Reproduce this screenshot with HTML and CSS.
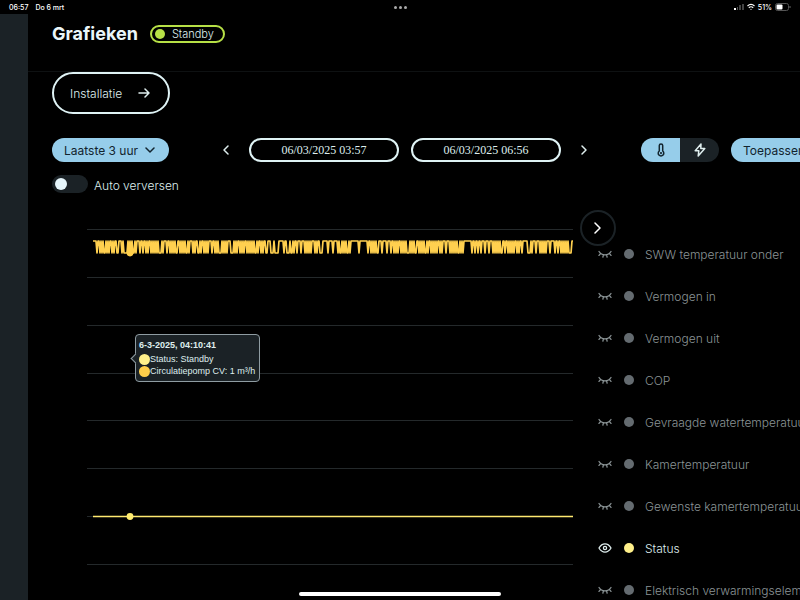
FILE: index.html
```
<!DOCTYPE html>
<html lang="nl">

<head>
    <meta charset="UTF-8">
    <meta name="viewport" content="width=device-width, initial-scale=1.0">
    <title>Grafieken</title>
    <link rel="stylesheet" href="styles.css">
</head>

<body>
    <svg class="symbols" width="0" height="0">
        <symbol id="eye-closed" viewBox="0 0 14 14">
            <path d="M1 4.5 Q3 7.8 7 7.8 T13 4.5 M2.8 6.4 L1 8.4 M5.4 7.8 L4.9 10.2 M8.6 7.8 L9.1 10.2 M11.2 6.4 L13 8.4" />
        </symbol>
        <symbol id="eye-open" viewBox="0 0 14 14">
            <path d="M1 7 Q3.4 2.9 7 2.9 T13 7 Q10.6 11.1 7 11.1 T1 7 Z" />
            <circle cx="7" cy="7" r="1.6" />
        </symbol>
    </svg>

    <div class="status-bar">
        <div class="status-left"><span>06:57</span><span>Do 6 mrt</span></div>
        <div class="status-dots"><i></i><i></i><i></i></div>
        <div class="status-right">
            <svg width="10" height="8" viewBox="0 0 10 8">
                <rect x="0" y="5" width="2" height="2" fill="#fff" />
                <rect x="3" y="4" width="1" height="3" fill="#555" />
                <rect x="5" y="2" width="2" height="5" fill="#444" />
                <rect x="8" y="1" width="2" height="6" fill="#444" />
            </svg>
            <svg width="8" height="8" viewBox="0 0 8 8" fill="none" stroke="#fff" stroke-width="1.2">
                <path d="M.5 3 Q4 -.2 7.5 3 M1.8 4.7 Q4 2.8 6.2 4.7" />
                <circle cx="4" cy="6.3" r=".6" fill="#fff" stroke="none" />
            </svg>
            <span>51%</span>
            <svg width="16" height="8" viewBox="0 0 16 8">
                <rect x=".5" y=".5" width="13" height="7" rx="2" fill="none" stroke="#555" />
                <rect x="1.5" y="1.5" width="6" height="5" rx="1" fill="#fff" />
                <path d="M15 3 v2" stroke="#666" />
            </svg>
        </div>
    </div>

    <div class="layout">
        <div class="sidebar"></div>
        <main class="main">
            <header class="header">
                <h1>Grafieken</h1>
                <span class="badge"><i></i>Standby</span>
            </header>

            <button type="button" class="btn-outline">Installatie
                <svg width="12" height="12" viewBox="0 0 12 12" class="icon">
                    <path d="M1 6 H11 M7 2 L11 6 L7 10" />
                </svg>
            </button>

            <div class="filters">
                <div class="select">
                    <select aria-label="Periode">
                        <option>Laatste 3 uur</option>
                    </select>
                    <svg width="10" height="10" viewBox="0 0 10 10" class="icon">
                        <path d="M1 3 L5 7 L9 3" />
                    </svg>
                </div>
                <div class="dates">
                    <button type="button" class="arrow prev" aria-label="Vorige">
                        <svg width="12" height="12" viewBox="0 0 12 12" class="icon">
                            <path d="M8 2 L4 6 L8 10" />
                        </svg>
                    </button>
                    <input type="text" aria-label="Van" value="06/03/2025 03:57">
                    <input type="text" aria-label="Tot" value="06/03/2025 06:56">
                    <button type="button" class="arrow" aria-label="Volgende">
                        <svg width="12" height="12" viewBox="0 0 12 12" class="icon">
                            <path d="M4 2 L8 6 L4 10" />
                        </svg>
                    </button>
                </div>
                <div class="actions">
                    <div class="segment">
                        <button type="button" class="active" aria-label="Temperatuur">
                            <svg width="8" height="14" viewBox="0 0 8 14" class="icon">
                                <path d="M2.3 8 V2.6 A1.7 1.7 0 0 1 5.7 2.6 V8 A2.8 2.8 0 1 1 2.3 8 Z" />
                                <circle cx="4" cy="10.2" r=".4" />
                            </svg>
                        </button>
                        <button type="button" aria-label="Energie">
                            <svg width="12" height="14" viewBox="0 0 12 14" class="icon">
                                <path d="M7 1 L1.2 7.8 H4.8 L4.2 13 L10.8 5.6 H6.8 Z" />
                            </svg>
                        </button>
                    </div>
                    <button type="button" class="btn-apply">Toepassen</button>
                </div>
            </div>

            <label class="refresh"><input type="checkbox"><span>Auto verversen</span></label>

            <div class="charts">
                <div class="plot">
                    <svg viewBox="0 0 486 390">
                        <g id="grid"></g>
                        <path id="pump" d="" />
                        <circle cx="43" cy="43" r="3.4" fill="#ffcf4a" />
                        <path id="state" d="M6 306.5 H486" />
                        <circle cx="43" cy="306.5" r="3.4" fill="#ffec70" />
                    </svg>
                    <div class="tooltip">
                        <strong>6-3-2025, 04:10:41</strong>
                        <div><i class="yellow"></i>Status: Standby</div>
                        <div><i class="orange"></i>Circulatiepomp CV: 1 m³/h</div>
                    </div>
                </div>
                <div class="legend">
                    <button type="button" class="collapse" aria-label="Inklappen">
                        <svg width="12" height="12" viewBox="0 0 12 12" class="icon">
                            <path d="M3 1 L8 6 L3 11" />
                        </svg>
                    </button>
                    <ul>
                        <li><button type="button"><svg class="eye"><use href="#eye-closed" /></svg><i></i>SWW temperatuur onder</button></li>
                        <li><button type="button"><svg class="eye"><use href="#eye-closed" /></svg><i></i>Vermogen in</button></li>
                        <li><button type="button"><svg class="eye"><use href="#eye-closed" /></svg><i></i>Vermogen uit</button></li>
                        <li><button type="button"><svg class="eye"><use href="#eye-closed" /></svg><i></i>COP</button></li>
                        <li><button type="button"><svg class="eye"><use href="#eye-closed" /></svg><i></i>Gevraagde watertemperatuur</button></li>
                        <li><button type="button"><svg class="eye"><use href="#eye-closed" /></svg><i></i>Kamertemperatuur</button></li>
                        <li><button type="button"><svg class="eye"><use href="#eye-closed" /></svg><i></i>Gewenste kamertemperatuur</button></li>
                        <li><button type="button" class="on"><svg class="eye"><use href="#eye-open" /></svg><i></i>Status</button></li>
                        <li><button type="button"><svg class="eye"><use href="#eye-closed" /></svg><i></i>Elektrisch verwarmingselement</button></li>
                    </ul>
                </div>
            </div>
        </main>
    </div>
    <div class="home-indicator"></div>

    <script src="chart.js"></script>
</body>

</html>
```
FILE: styles.css
```
* {
    box-sizing: border-box;
}

body {
    font-family: 'Inter', 'Liberation Sans', sans-serif;
    font-size: 12px;
    margin: 0;
    height: 100vh;
    display: flex;
    flex-direction: column;
    overflow: hidden;
    background-color: #000;
    color: #dfeeee;
}

button,
select {
    font: inherit;
    color: inherit;
    background: none;
    border: none;
    padding: 0;
    cursor: pointer;
}

.symbols {
    position: absolute;
}

.icon {
    fill: none;
    stroke: currentColor;
    stroke-width: 1.5;
    stroke-linecap: round;
    stroke-linejoin: round;
}

.status-bar {
    display: grid;
    grid-template-columns: 1fr auto 1fr;
    align-items: center;
    height: 14px;
    padding: 0 9px;
    font-size: 7px;
    font-weight: 500;
    color: #fff;
}

.status-left,
.status-right {
    display: flex;
    align-items: center;
    gap: 7px;
}

.status-right {
    justify-content: flex-end;
    gap: 3px;
}

.status-dots {
    display: flex;
    gap: 2px;
}

.status-dots i {
    width: 3px;
    height: 3px;
    border-radius: 50%;
    background-color: #aaa;
}

.layout {
    flex: 1;
    display: flex;
    min-height: 0;
}

.sidebar {
    width: 28px;
    background-color: #1b2226;
}

.main {
    flex: 1;
    min-width: 0;
    padding-left: 24px;
    overflow: hidden;
}

.header {
    display: flex;
    align-items: center;
    gap: 12px;
    height: 58px;
    margin-left: -24px;
    padding: 0 24px 18px;
    border-bottom: 1px solid #0e1112;
}

.header h1 {
    margin: 0;
    font-size: 18px;
    font-weight: 700;
    line-height: 24px;
    color: #eaf6fa;
}

.badge {
    display: flex;
    align-items: center;
    gap: 7px;
    height: 18px;
    padding: 0 9px 0 3px;
    border: 2px solid #b7e046;
    border-radius: 9px;
    font-size: 11px;
    font-weight: 300;
}

.badge i {
    width: 10px;
    height: 10px;
    border-radius: 50%;
    background-color: #b7e046;
}

.btn-outline {
    display: flex;
    align-items: center;
    justify-content: space-between;
    width: 118px;
    height: 42px;
    padding: 0 18px 0 16px;
    border: 2px solid #dff3f5;
    border-radius: 21px;
    font-weight: 300;
}

.filters {
    display: flex;
    align-items: center;
    justify-content: space-between;
    margin: 24px -17px 0 0;
}

.select {
    display: flex;
    align-items: center;
    position: relative;
    color: #12242e;
}

.select select {
    appearance: none;
    width: 117px;
    height: 24px;
    padding: 0 12px;
    border-radius: 12px;
    background-color: #96cdea;
}

.select svg {
    position: absolute;
    right: 14px;
    pointer-events: none;
}

.dates {
    display: flex;
    align-items: center;
    gap: 12px;
}

.arrow {
    display: flex;
    width: 22px;
    justify-content: center;
}

.arrow.prev {
    justify-content: center;
}

.dates input {
    width: 150px;
    height: 24px;
    padding: 0;
    border: 2px solid #dff3f5;
    border-radius: 12px;
    background: none;
    color: #dfeeee;
    font-family: 'Liberation Serif', serif;
    font-size: 12px;
    text-align: center;
}

.actions {
    display: flex;
    gap: 12px;
}

.segment {
    display: flex;
    border-radius: 12px;
    overflow: hidden;
    background-color: #1b2226;
}

.segment button {
    display: flex;
    align-items: center;
    justify-content: center;
    width: 39px;
    height: 24px;
}

.segment .active {
    background-color: #96cdea;
    color: #12242e;
}

.btn-apply {
    height: 24px;
    padding: 0 12px;
    border-radius: 12px;
    background-color: #96cdea;
    color: #12242e;
}

.refresh {
    display: flex;
    align-items: center;
    gap: 6px;
    height: 22px;
    margin-top: 12px;
    font-weight: 300;
}

.refresh input {
    appearance: none;
    display: flex;
    align-items: center;
    width: 36px;
    height: 18px;
    margin: 0 0 2px;
    padding: 3px;
    border-radius: 9px;
    background-color: #1b2226;
}

.refresh input::before {
    content: "";
    width: 12px;
    height: 12px;
    border-radius: 50%;
    background-color: #e6f5fa;
}

.refresh input:checked {
    justify-content: flex-end;
    background-color: #96cdea;
}

.charts {
    display: flex;
    align-items: flex-start;
    gap: 7px;
    margin-top: 14px;
    padding-left: 35px;
}

.plot {
    flex: 1;
    position: relative;
}

.plot svg {
    display: block;
    width: 100%;
}

#grid line {
    stroke: #24292b;
    stroke-width: 1;
}

#pump {
    fill: none;
    stroke: #ffd04f;
    stroke-width: 1.7;
    stroke-linejoin: round;
}

#state {
    stroke: #ffe970;
    stroke-width: 1.7;
}

.tooltip {
    position: absolute;
    top: 124px;
    left: 48px;
    padding: 4px 4px 4px 3px;
    border: 1px solid #8f9ca2;
    border-radius: 4px;
    background-color: #1b2226;
    font-family: 'Liberation Sans', sans-serif;
    font-size: 9px;
    line-height: 12px;
    white-space: nowrap;
}

.tooltip::before {
    content: "";
    position: absolute;
    top: 20px;
    left: -4px;
    width: 6px;
    height: 6px;
    border: solid #8f9ca2;
    border-width: 0 0 1px 1px;
    background-color: #1b2226;
    transform: rotate(45deg);
}

.tooltip strong {
    display: block;
    margin-bottom: 2px;
}

.tooltip div {
    display: flex;
    align-items: center;
}

.tooltip i {
    position: relative;
    width: 11px;
    height: 11px;
    border-radius: 50%;
}

.yellow {
    background-color: #fff08a;
}

.orange {
    background-color: #ffcf4a;
}

.legend {
    width: 220px;
}

.collapse {
    position: relative;
    display: flex;
    align-items: center;
    justify-content: center;
    width: 36px;
    height: 36px;
    border: 2px solid #1b2226;
    border-radius: 50%;
    background-color: #000;
    color: #fff;
}

.legend ul {
    list-style: none;
    margin: -13px 0 0;
    padding: 0 0 0 18px;
}

.legend li button {
    display: flex;
    align-items: center;
    height: 42px;
    font-weight: 300;
    white-space: nowrap;
    color: #8b9496;
}

.legend li i {
    width: 10px;
    height: 10px;
    margin: 0 11px 0 12px;
    border-radius: 50%;
    background-color: #646b70;
}

.legend .on {
    color: #dfeeee;
}

.legend .on i {
    background-color: #fff08a;
}

.eye {
    width: 14px;
    height: 14px;
    fill: none;
    stroke: currentColor;
    stroke-width: 1.3;
    stroke-linecap: round;
}

.home-indicator {
    position: fixed;
    bottom: 4px;
    left: 50%;
    width: 202px;
    height: 4px;
    margin-left: -101px;
    border-radius: 2px;
    background-color: #fff;
}
```
FILE: chart.js
```
// horizontal grid lines
let lines = '';
for (let i = 0; i < 8; i++) {
    const y = Math.round(19 + i * 47.86) + 0.5;
    lines += `<line x1="0" x2="486" y1="${y}" y2="${y}" />`;
}
document.getElementById('grid').innerHTML = lines;

// pump flow: how long each high / low period lasts, starting high
const periods =
    '4121111211112111' + '22311411111211' + '3121211121111111' + '13' +
    '1131211111' + '1221' + '1111121131112211' + '211111312111' +
    '13111111331111211111211111111211' + '2111' + '223314' + '5123' + '1211' +
    '213131' + '111111' + '3111' + '2351' + '4141' + '1211' + '111211' +
    '8181' + '21111112' + '314131' + '211111211111' + '13111112' +
    '2111111211211111112111' + '3131' + '11111112' + '1111' + '81' +
    '212121' + '313131' + '111111' + '1221' + '211111112111' + '2153' +
    '113131' + '111111' + '31412121' + '111111' + '13' + '6262';

// rising and falling edges are slanted, one unit wide
let path = 'M6 31';
let high = true;
let x = 6;
for (const p of periods) {
    if (x + Number(p) > 486) break;
    path += `h${p - 1}l1 ${high ? 12 : -12}`;
    x += Number(p);
    high = !high;
}
document.getElementById('pump').setAttribute('d', `${path}H486`);
```
